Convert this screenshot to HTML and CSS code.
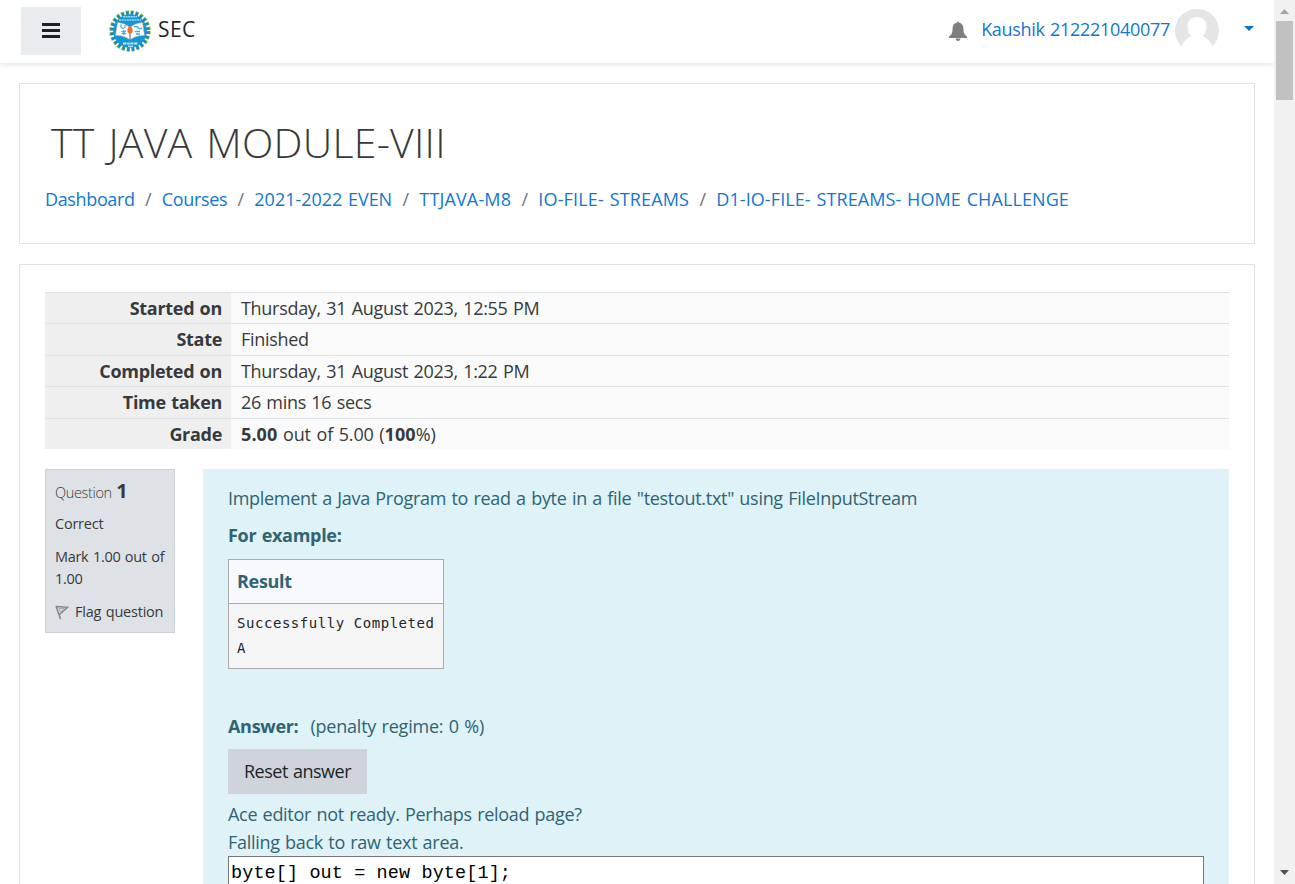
FILE: index.html
```html
<!DOCTYPE html>
<html lang="en">
<head>
<meta charset="utf-8">
<title>TT JAVA MODULE-VIII</title>
<link rel="stylesheet" href="styles.css">
</head>
<body>
<div class="window">
  <div class="page">
    <header class="navbar">
      <button class="drawer-toggle" aria-label="Side panel">
        <svg width="18" height="15" viewBox="0 0 18 15"><path d="M0 0h18v3H0zM0 6h18v3H0zM0 12h18v3H0z" fill="#1d2125"/></svg>
      </button>
      <a class="brand">
        <svg class="logo" width="42" height="42" viewBox="0 0 42 42">
          <circle cx="21" cy="21" r="18.500" fill="none" stroke="#a4d24a" stroke-width="4.600" stroke-dasharray="3.250 1.593"/>
          <circle cx="21" cy="21" r="18" fill="none" stroke="#1686c4" stroke-width="4" stroke-dasharray="2.500 2.212" stroke-dashoffset="-.3"/>
          <circle cx="21" cy="21" r="16.800" fill="#1296d6"/>
          <path d="M14 6.800h14M10 10h22" stroke="#9bdcf5" stroke-width="1.400" stroke-dasharray="2 .6"/>
          <path d="M8.500 12.500Q16 13 21 17.500Q26 13 33.500 12.500L35.500 25.500Q27 25 21 30Q15 25 6.500 25.500Z" fill="#fff" stroke="#d9a184" stroke-width=".6"/>
          <path d="M21 17v13" stroke="#17689a" stroke-width="1"/>
          <path d="M12 14.500v2.500q2 3 4 0v-2M12.500 21l4.500 3m0-3l-4.500 3M14.800 20v5M25 16.500h3l2 2h3M26 21.500h5m-4 2.500h4" fill="none" stroke="#48acd9" stroke-width="1.300"/>
          <path d="M21 15.500q4.500 4.500 1.300 8h-2.600Q16.500 20 21 15.500Z" fill="#f36d2b"/>
          <path d="M14 33.500h15" stroke="#c5e9f5" stroke-width="1.800" stroke-dasharray="3 .7"/>
          <path d="M19 36.300h5" stroke="#c5e9f5" stroke-width="1.200"/>
        </svg>
        <span>SEC</span>
      </a>
      <div class="usernav">
        <svg class="bell" width="18" height="20" viewBox="0 0 18 20"><path d="M8 1.400Q9-.6 10 1.400C13.500 2.300 14.500 5 14.500 8.500C14.500 12.500 16 14 18 15.500V17H0V15.500C2 14 3.500 12.500 3.500 8.500C3.500 5 4.500 2.300 8 1.400ZM6.500 17.500h5Q11 20 9 20T6.500 17.500Z" fill="#7f7f7f"/></svg>
        <a class="username">Kaushik 212221040077</a>
        <svg class="avatar" width="44" height="44" viewBox="0 0 44 44">
          <path d="M6.500 37.500A22 22 0 1 1 37.500 37.500Q34 29.500 27.500 27Q31.500 23.500 31.500 17.500C31.500 11.500 27.500 8 22 8S12.500 11.500 12.500 17.500Q12.500 23.500 16.500 27Q10 29.500 6.500 37.500Z" fill="#e5e5e5"/>
        </svg>
        <svg class="caret" width="10" height="5" viewBox="0 0 10 5"><path d="M0 0h10L5 5z" fill="#0f6fd0"/></svg>
      </div>
    </header>

    <main class="content">
      <section class="card heading-card">
        <h1>TT JAVA MODULE-VIII</h1>
        <nav class="breadcrumb">
          <a>Dashboard</a><i>/</i><a>Courses</a><i>/</i><a class="term">2021-2022 EVEN</a><i>/</i><a class="caps">TTJAVA-M8</a><i>/</i><a class="caps">IO-FILE- STREAMS</a><i>/</i><a class="activity">D1-IO-FILE- STREAMS- HOME CHALLENGE</a>
        </nav>
      </section>

      <section class="card quiz-card">
        <table class="summary">
          <tr><th>Started on</th><td>Thursday, 31 August 2023, 12:55 PM</td></tr>
          <tr class="state-row"><th>State</th><td>Finished</td></tr>
          <tr><th>Completed on</th><td>Thursday, 31 August 2023, 1:22 PM</td></tr>
          <tr><th>Time taken</th><td>26 mins 16 secs</td></tr>
          <tr><th>Grade</th><td class="grade"><b>5.00</b> out of 5.00 (<b>100</b>%)</td></tr>
        </table>

        <div class="question">
          <aside class="info">
            <div class="number">Question <b>1</b></div>
            <div class="state">Correct</div>
            <div class="mark">Mark 1.00 out of<br>1.00</div>
            <div class="flag">
              <svg width="14" height="15" viewBox="0 0 14 15"><path d="M1 1l4.500 13M1.500 1.500l11 .8L4.500 9.500" fill="none" stroke="#858585" stroke-width="1.500"/><path d="M4 3.500h5L5.500 7z" fill="none" stroke="#a9a9a9"/></svg>
              <span>Flag question</span>
            </div>
          </aside>
          <div class="formulation">
            <p>Implement a Java Program to read a byte in a file "testout.txt" using FileInputStream</p>
            <p class="example"><b>For example:</b></p>
            <table class="result">
              <tr><th>Result</th></tr>
              <tr><td><pre>Successfully Completed
A</pre></td></tr>
            </table>
            <p class="answer"><b>Answer:</b><span class="penalty">(penalty regime: 0 %)</span></p>
            <button class="reset">Reset answer</button>
            <p class="fallback">Ace editor not ready. Perhaps reload page?<br>Falling back to raw text area.</p>
            <div class="code" role="textbox">byte[] out = new byte[1];</div>
          </div>
        </div>
      </section>
    </main>
  </div>
  <div class="scrollbar">
    <svg width="9" height="5" viewBox="0 0 9 5"><path d="M0 5h9L4.500 0z" fill="#a3a3a3"/></svg>
    <div class="thumb"></div>
    <svg class="down" width="9" height="5" viewBox="0 0 9 5"><path d="M0 0h9L4.500 5z" fill="#505050"/></svg>
  </div>
</div>
</body>
</html>
```
FILE: styles.css
```css
* { box-sizing: border-box; }
body {
  margin: 0;
  font: 18px/28px "Open Sans", "Noto Sans", sans-serif;
  letter-spacing: -.3px;
  word-spacing: 1px;
  color: #373a3c;
  background: #fff;
}
p, h1, pre { margin: 0; }
b, th { font-weight: 700; letter-spacing: -.3px; }
svg { display: block; flex: none; }
button { border: 0; padding: 0; font: inherit; }
.window { display: flex; height: 884px; overflow: hidden; }
.page { flex: 1; min-width: 0; height: 884px; overflow: hidden; }

.navbar {
  display: flex;
  align-items: center;
  height: 63px;
  padding: 0 20px 2px 21px;
  background: #fff;
  box-shadow: 0 2px 5px rgba(0, 0, 0, .1);
}
.drawer-toggle {
  display: grid;
  place-items: center;
  width: 60px;
  height: 48px;
  background: #e9ecef;
}
.brand { display: flex; align-items: center; gap: 7px; margin-left: 28px; font-size: 21px; letter-spacing: .4px; color: #212529; }
.brand span, .username { padding-bottom: 3px; }
.usernav { display: flex; align-items: center; margin-left: auto; color: #1177d1; }
.bell { margin-right: 14px; }
.avatar { margin-left: 5px; }
.caret { margin: 0 0 4px 25px; }

.content { padding: 20px 19px; }
.card { border: 1px solid #dee2e6; }
.heading-card { height: 161px; padding: 36px 25px 0; }
h1 { padding-left: 6px; font-size: 41px; font-weight: 300; line-height: 44px; letter-spacing: .25px; word-spacing: 3px; }
.breadcrumb { display: flex; margin-top: 21px; color: #1177d1; white-space: nowrap; }
.breadcrumb a { letter-spacing: -.36px; }
.breadcrumb i { flex: none; font-style: normal; color: #6c757d; width: 27.200px; text-align: center; }
.breadcrumb .term { letter-spacing: -.02px; }
.breadcrumb .caps { letter-spacing: .15px; }
.breadcrumb .activity { letter-spacing: .09px; }

.quiz-card { margin-top: 20px; padding: 27px 25px 0; }
.summary { width: 100%; border-collapse: collapse; background: #fafafa; }
.summary th, .summary td { height: 31.400px; padding: 0 9px; border-top: 1px solid #dee2e6; line-height: 30px; }
.summary td { padding-left: 10px; }
.summary .state-row > * { line-height: 29px; padding-bottom: 1px; }
.summary .grade { letter-spacing: -.12px; }
.grade b { letter-spacing: .1px; }
.summary th { width: 186px; background: #efefef; text-align: right; }

.question { display: flex; align-items: flex-start; gap: 28px; margin-top: 20px; }
.info {
  flex: none;
  width: 130px;
  height: 164px;
  padding: 7px 9px;
  border: 1px solid #cad0d7;
  background: #dee2e6;
  font-size: 14.500px;
  line-height: 22px;
  letter-spacing: -.22px;
  white-space: nowrap;
}
.number { font-weight: 300; line-height: 28px; height: 28px; letter-spacing: -.35px; }
.number b { font-size: 20px; }
.state { margin-top: 8px; }
.mark { margin-top: 11px; letter-spacing: -.3px; }
.flag { display: flex; align-items: center; gap: 6px; margin-top: 11px; }

.formulation { flex: 1; height: 460px; padding: 15px 25px 0; background: #def2f8; color: #2f6473; white-space: nowrap; }
.example { margin-top: 9px; }
.result { margin-top: 10px; width: 215px; border-collapse: collapse; }
.result th, .result td { border: 1px solid #aaa; padding: 0 8px; text-align: left; }
.result th { height: 44px; padding-bottom: 2px; background: #f8f8ff; }
.result td { height: 65px; background: #f5f5f5; }
pre { font: 14px/25px "DejaVu Sans Mono", monospace; letter-spacing: .55px; word-spacing: 0; width: 198px; color: #212529; }
.answer { margin-top: 43px; }
.penalty { margin-left: 12px; letter-spacing: -.22px; }
.reset { width: 139px; height: 45px; margin-top: 9px; padding-bottom: 2px; background: #ced4da; color: #212529; letter-spacing: -.5px; word-spacing: 1px; }
.fallback { margin-top: 6px; }
.code { height: 60px; padding: 4px 2px; border: 1px solid #767676; background: #fff; color: #000; font: 18.500px/26px "Liberation Mono", monospace; letter-spacing: .1px; word-spacing: 0; }

.scrollbar { display: flex; flex-direction: column; align-items: center; width: 21px; padding: 9px 0; background: #f1f1f1; }
.thumb { width: 17px; height: 79px; margin-top: 7px; background: #c1c1c1; }
.down { margin-top: auto; }
```
